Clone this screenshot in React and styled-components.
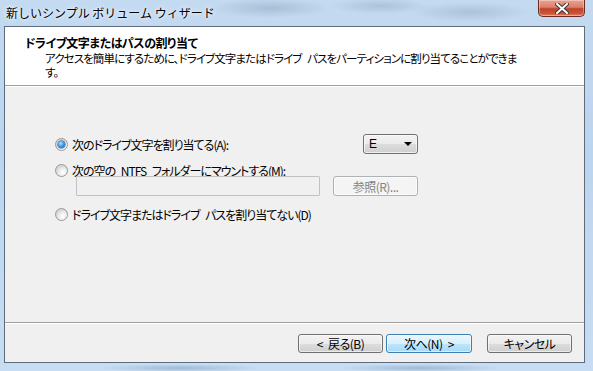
import React from "react";
import styled, { createGlobalStyle } from "styled-components";

const GlobalStyle = createGlobalStyle`
  html, body { margin: 0; padding: 0; width: 593px; height: 371px; overflow: hidden; }
  body {
    font-family: "Noto Sans CJK JP", "Noto Sans", sans-serif;
    font-size: 12px;
    color: #000;
  }
`;

const Window = styled.div`
  width: 593px;
  height: 371px;
  box-sizing: border-box;
  padding: 0 8px 8px 4px;
  display: flex;
  flex-direction: column;
  background:
    radial-gradient(ellipse 60px 10px at 270px 8px, rgba(120,140,165,0.35), transparent),
    radial-gradient(ellipse 50px 8px at 380px 6px, rgba(120,140,165,0.3), transparent),
    radial-gradient(ellipse 60px 10px at 470px 12px, rgba(120,140,165,0.3), transparent),
    radial-gradient(ellipse 80px 4px at 180px 368px, rgba(90,120,160,0.35), transparent),
    radial-gradient(ellipse 80px 4px at 420px 368px, rgba(90,120,160,0.35), transparent),
    linear-gradient(180deg, #c3daf1 0%, #bcd5ee 40%, #c6ddf3 100%);
`;

const TitleBar = styled.div`
  height: 26px;
  display: flex;
  align-items: flex-start;
  flex-shrink: 0;
`;

const TitleText = styled.span`
  margin: 4px 0 0 2px;
  font-size: 12px;
  text-shadow: 0 0 6px rgba(255,255,255,0.9), 0 0 3px rgba(255,255,255,0.8);
`;

const CloseButton = styled.div`
  margin-left: auto;
  width: 47px;
  height: 17px;
  box-sizing: border-box;
  border: 1px solid #6b2a22;
  border-top: none;
  border-radius: 0 0 5px 5px;
  background: linear-gradient(180deg, #e9a393 0%, #d9806c 45%, #c0412a 55%, #cc5537 85%, #e08a6c 100%);
  box-shadow: inset 0 0 0 1px rgba(255,255,255,0.35);
  display: flex;
  align-items: center;
  justify-content: center;
`;

const Client = styled.div`
  flex: 1;
  border: 1px solid #5d6b7c;
  display: flex;
  flex-direction: column;
  background: #f0f0f0;
`;

const Header = styled.div`
  height: 59px;
  flex-shrink: 0;
  background: #fff;
  border-bottom: 1px solid #a0a0a0;
  box-shadow: 0 1px 0 #fff;
  padding: 8px 0 0 20px;
  box-sizing: border-box;
`;

const HeaderTitle = styled.div`
  font-weight: 700;
  font-size: 12px;
  line-height: 16px;
  letter-spacing: -0.5px;
  font-feature-settings: "palt";
`;

const HeaderDesc = styled.div`
  margin: 0 0 0 20px;
  font-size: 11.5px;
  line-height: 14px;
  letter-spacing: -0.9px;
  word-spacing: 4px;
  font-feature-settings: "palt";
`;

const Body = styled.div`
  flex: 1;
  padding: 48px 0 0 50px;
  display: flex;
  flex-direction: column;
  width: 363px;
`;

const Row = styled.div`
  display: flex;
  align-items: center;
  justify-content: space-between;
  height: ${(p) => p.$h || 20}px;
  margin-top: ${(p) => p.$mt || 0}px;
  padding-left: ${(p) => p.$indent || 0}px;
`;

const RadioLabel = styled.label`
  display: flex;
  align-items: center;
  gap: 4px;
  font-size: 12px;
  letter-spacing: -1px;
  word-spacing: 4px;
  font-feature-settings: "palt";
  white-space: pre;
`;

const RadioCircle = styled.span`
  width: 13px;
  height: 13px;
  box-sizing: border-box;
  border-radius: 50%;
  border: 1px solid #979797;
  background: radial-gradient(circle at 65% 70%, #ffffff 0%, #f0f0f0 35%, #d4d4d4 70%, #e6e6e6 100%);
  display: flex;
  align-items: center;
  justify-content: center;
  flex-shrink: 0;

  &::after {
    content: "";
    display: ${(p) => (p.$checked ? "block" : "none")};
    width: 7px;
    height: 7px;
    border-radius: 50%;
    background: radial-gradient(circle at 40% 35%, #b8e3ff 0%, #4aa3ea 40%, #1460b8 85%);
    box-shadow: 0 0 0 0.5px #1b4f8a;
  }
`;

const Combo = styled.div`
  width: 55px;
  height: 20px;
  box-sizing: border-box;
  border: 1px solid #707070;
  border-radius: 3px;
  background: linear-gradient(180deg, #f2f2f2 0%, #ebebeb 50%, #dddddd 51%, #cfcfcf 100%);
  box-shadow: inset 0 0 0 1px rgba(255,255,255,0.7);
  display: flex;
  align-items: center;
  justify-content: space-between;
  padding: 0 5px 0 5px;
  font-family: "Liberation Sans", sans-serif;
  font-size: 12px;
`;

const Arrow = styled.span`
  width: 0;
  height: 0;
  border-left: 4px solid transparent;
  border-right: 4px solid transparent;
  border-top: 4px solid #000;
`;

const TextField = styled.div`
  width: 244px;
  height: 20px;
  box-sizing: border-box;
  border: 1px solid #c2c2c2;
  border-radius: 1px;
  background: #f0f0f0;
`;

const Button = styled.div`
  width: ${(p) => p.$w || 85}px;
  height: ${(p) => p.$h || 20}px;
  box-sizing: border-box;
  border-radius: 3px;
  display: flex;
  align-items: center;
  justify-content: center;
  font-size: 12px;
  letter-spacing: -0.5px;
  word-spacing: 3px;
  font-feature-settings: "palt";
  white-space: pre;
  border: 1px solid ${(p) => (p.$disabled ? "#adb2b5" : p.$default ? "#3c7fb1" : "#707070")};
  color: ${(p) => (p.$disabled ? "#838383" : "#000")};
  background: ${(p) =>
    p.$disabled
      ? "#f4f4f4"
      : p.$default
      ? "linear-gradient(180deg, #eaf6fd 0%, #d9f0fc 50%, #bee6fd 51%, #a7d9f5 100%)"
      : "linear-gradient(180deg, #f2f2f2 0%, #ebebeb 50%, #dddddd 51%, #cfcfcf 100%)"};
  box-shadow: inset 0 0 0 1px rgba(255,255,255,0.6);
`;

const Footer = styled.div`
  height: 40px;
  flex-shrink: 0;
  border-top: 1px solid #a0a0a0;
  box-shadow: inset 0 1px 0 #fff;
  display: flex;
  align-items: flex-start;
  justify-content: flex-end;
  padding: 11px 12px 0 0;
  box-sizing: border-box;
`;

const NavGroup = styled.div`
  display: flex;
  gap: 3px;
  margin-right: 15px;
`;

export default function App() {
  return (
    <>
      <GlobalStyle />
      <Window>
        <TitleBar>
          <TitleText>新しいシンプル ボリューム ウィザード</TitleText>
          <CloseButton>
            <svg width="14" height="11" viewBox="0 0 14 11">
              <path d="M2 1 L12 10 M12 1 L2 10" stroke="#3a3a3a" strokeWidth="4" strokeLinecap="square" />
              <path d="M2 1 L12 10 M12 1 L2 10" stroke="#ffffff" strokeWidth="2" strokeLinecap="square" />
            </svg>
          </CloseButton>
        </TitleBar>
        <Client>
          <Header>
            <HeaderTitle>ドライブ文字またはパスの割り当て</HeaderTitle>
            <HeaderDesc>
              アクセスを簡単にするために、ドライブ文字またはドライブ パスをパーティションに割り当てることができま
              <br />
              す。
            </HeaderDesc>
          </Header>
          <Body>
            <Row $h={20}>
              <RadioLabel>
                <RadioCircle $checked />
                次のドライブ文字を割り当てる(A):
              </RadioLabel>
              <Combo>
                E
                <Arrow />
              </Combo>
            </Row>
            <Row $h={12} $mt={10}>
              <RadioLabel>
                <RadioCircle />
                次の空の NTFS フォルダーにマウントする(M):
              </RadioLabel>
            </Row>
            <Row $h={20} $indent={21}>
              <TextField />
              <Button $disabled $w={85}>参照(R)...</Button>
            </Row>
            <Row $h={16} $mt={10}>
              <RadioLabel>
                <RadioCircle />
                ドライブ文字またはドライブ パスを割り当てない(D)
              </RadioLabel>
            </Row>
          </Body>
          <Footer>
            <NavGroup>
              <Button $h={19}>&lt; 戻る(B)</Button>
              <Button $h={19} $default $w={86}>次へ(N) &gt;</Button>
            </NavGroup>
            <Button $h={19}>キャンセル</Button>
          </Footer>
        </Client>
      </Window>
    </>
  );
}
